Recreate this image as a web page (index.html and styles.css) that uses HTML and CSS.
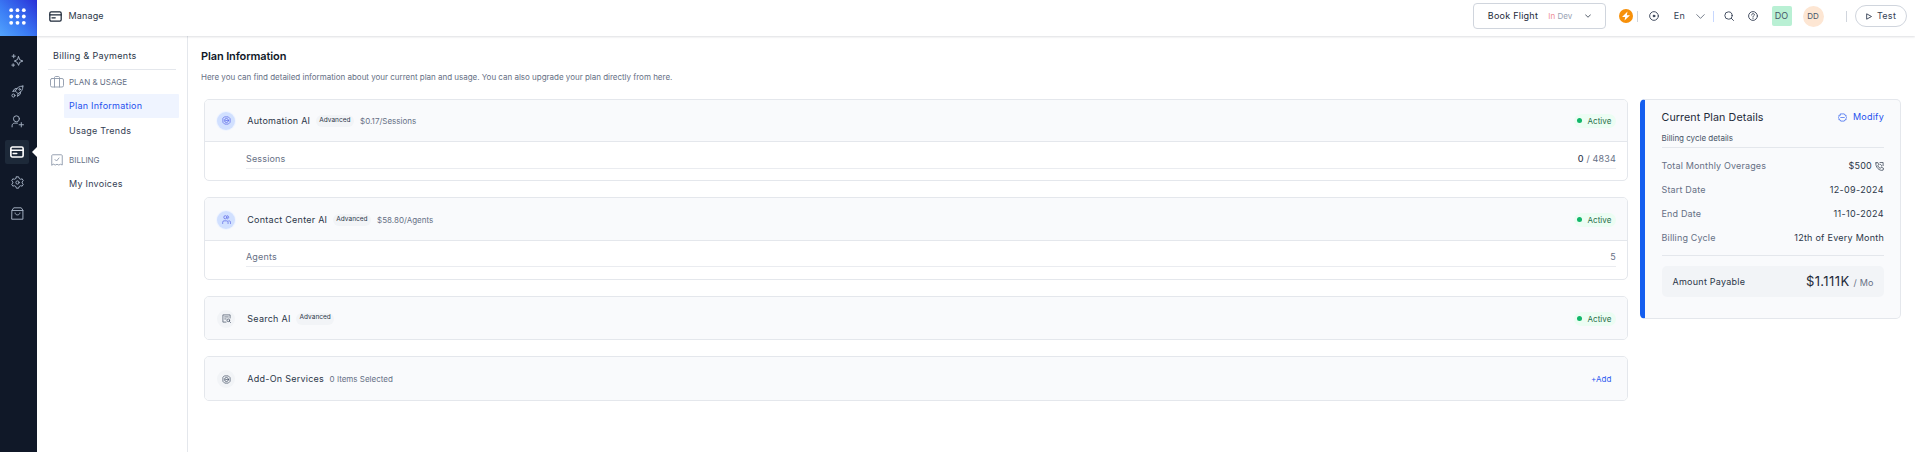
FILE: index.html
```html
<!DOCTYPE html>
<html lang="en">
<head>
<meta charset="utf-8">
<title>Manage - Billing &amp; Payments</title>
<link rel="stylesheet" href="styles.css">
</head>
<body>
<svg class="defs" width="0" height="0">
  <symbol id="card" viewBox="0 0 24 20"><rect x="1.500" y="1.500" width="21" height="17" rx="2.500"/><path d="M1.500 7h21M5.500 12.500h6"/></symbol>
  <symbol id="chip" viewBox="0 0 20 20"><path d="M6 2h8l4 4v8l-4 4H6l-4-4V6z"/><circle cx="10" cy="10" r="4.500"/><path d="M8 10h4"/></symbol>
  <symbol id="chevron" viewBox="0 0 24 24"><path d="M2 7l10 10L22 7"/></symbol>
</svg>
<div class="app">
  <nav class="rail">
    <div class="logo"><svg width="17" height="17" viewBox="0 0 17 17"><g fill="#fff"><circle cx="2.200" cy="2.200" r="1.900"/><circle cx="8.500" cy="2.200" r="1.900"/><circle cx="14.800" cy="2.200" r="1.900"/><circle cx="2.200" cy="8.500" r="1.900"/><circle cx="8.500" cy="8.500" r="1.900"/><circle cx="14.800" cy="8.500" r="1.900"/><circle cx="2.200" cy="14.800" r="1.900"/><circle cx="8.500" cy="14.800" r="1.900"/><circle cx="14.800" cy="14.800" r="1.900"/></g></svg></div>
    <div class="rail-items">
      <a class="rail-item"><svg class="ic" width="13" height="13" viewBox="0 0 24 24"><path d="M14 5l2 5.500 6 2.500-6 2.500-2 5.500-2.500-5.500L6 13l5.500-2.500zM5 1v6M2 4h6M4 18v5M1.500 20.500h5"/></svg></a>
      <a class="rail-item"><svg class="ic" width="13" height="13" viewBox="0 0 24 24"><path d="M22 2c-7 0-11 3-14 9l5 5c6-3 9-7 9-14zM8 11l-5 1 4-5 4-.500M13 16l-1 5 5-4 .500-4"/><circle cx="4.500" cy="19.500" r="2.800"/><circle cx="16" cy="8" r="1.500"/></svg></a>
      <a class="rail-item"><svg class="ic" width="13" height="13" viewBox="0 0 24 24"><circle cx="10" cy="7" r="5.500"/><path d="M2 22v-2c0-3 2-5 5-5h5M19 14v8M15 18h8"/></svg></a>
      <a class="rail-item active"><svg class="ic" width="14" height="12"><use href="#card"/></svg></a>
      <a class="rail-item"><svg class="ic" width="13" height="13" viewBox="0 0 24 24"><path d="M10 1.500h4l1 3 2.500 1.500 3.200-.700 2 3.500L20.500 11v2l2.200 2.200-2 3.500-3.200-.700-2.500 1.500-1 3h-4l-1-3L6.500 18l-3.200.700-2-3.500L3.500 13v-2L1.300 8.800l2-3.500 3.200.700L9 4.500z"/><circle cx="12" cy="12" r="3"/></svg></a>
      <a class="rail-item"><svg class="ic" width="13" height="13" viewBox="0 0 24 24"><path d="M2 6l3-4.500h14L22 6v16.500H2zM2 6.500h20M7.500 11c0 5 9 5 9 0"/></svg></a>
    </div>
  </nav>
  <div class="body">
    <header class="top">
      <svg class="ic dark" width="13" height="11"><use href="#card"/></svg>
      <span class="top-title">Manage</span>
      <div class="top-right">
        <div class="app-select"><span class="app-name">Book Flight</span><span class="app-env"><i>In</i> Dev</span><svg class="ic" width="6" height="6"><use href="#chevron"/></svg></div>
        <svg class="bolt" width="14" height="14" viewBox="0 0 14 14"><circle cx="7" cy="7" r="7" fill="#f79009"/><path d="M8.500 2.500L3 8h3.200L5.500 11.500 11 6.200H7.800z" fill="#fff"/></svg>
        <span class="sep"></span>
        <svg class="ic target" width="10" height="10" viewBox="0 0 20 20"><circle cx="10" cy="10" r="8.700"/><circle cx="10" cy="10" r="1.800" fill="currentColor"/></svg>
        <span class="lang">En</span>
        <svg class="ic lang-chev" width="9" height="9"><use href="#chevron"/></svg>
        <span class="sep blue"></span>
        <svg class="ic search" width="10" height="10" viewBox="0 0 20 20"><circle cx="9" cy="9" r="7.300"/><path d="M14.500 14.500L19 19"/></svg>
        <svg class="ic help" width="10" height="10" viewBox="0 0 20 20"><circle cx="10" cy="10" r="8.800"/><path d="M7.300 8c0-4 5.500-3.500 5.500-.500 0 2-2.800 2-2.800 4M10 14v1"/></svg>
        <span class="tag-do">DO</span>
        <span class="tag-dd">DD</span>
        <span class="sep last"></span>
        <button class="test"><svg class="ic" width="6" height="7" viewBox="0 0 12 14"><path d="M2 2l9 5-9 5z"/></svg>Test</button>
      </div>
    </header>
    <div class="content">
      <aside class="side">
        <h2 class="side-title">Billing &amp; Payments</h2>
        <div class="group"><svg class="ic" width="14" height="12" viewBox="0 0 28 24"><rect x="1" y="5" width="26" height="17" rx="3"/><path d="M9 22V3c0-1 1-2 2-2h6c1 0 2 1 2 2v19"/></svg>PLAN &amp; USAGE</div>
        <a class="link on">Plan Information</a>
        <a class="link">Usage Trends</a>
        <div class="group billing"><svg class="ic" width="12" height="12" viewBox="0 0 24 24"><path d="M1.500 22V4c0-2 1-2.500 2.500-2.500h16c1.500 0 2.500.500 2.500 2.500v18l-3.500-1.500-3.500 1.500-3.500-1.500L8.500 22 5 20.500zM8 11l3 3 5-6"/></svg>BILLING</div>
        <a class="link">My Invoices</a>
      </aside>
      <main class="main">
        <h1 class="title">Plan Information</h1>
        <p class="desc">Here you can find detailed information about your current plan and usage. You can also upgrade your plan directly from here.</p>
        <div class="cols">
          <div class="cards">
            <section class="card c1">
              <div class="card-head"><span class="bubble blue"><svg class="ic" width="9" height="9"><use href="#chip"/></svg></span><span class="name">Automation AI</span><span class="adv">Advanced</span><span class="price">$0.17/Sessions</span><span class="status">Active</span></div>
              <div class="card-row"><span>Sessions</span><span><b>0</b> / 4834</span></div>
            </section>
            <section class="card c2">
              <div class="card-head"><span class="bubble blue"><svg class="ic" width="9" height="9" viewBox="0 0 20 20"><circle cx="7.500" cy="5" r="3.500"/><path d="M12 1.500c4 0 4 7 0 7M1.500 19v-3c0-2 1-3 3-3h6c2 0 3 1 3 3v3M15 13c3 0 4 1 4 3v3"/></svg></span><span class="name">Contact Center AI</span><span class="adv">Advanced</span><span class="price">$58.80/Agents</span><span class="status">Active</span></div>
              <div class="card-row"><span>Agents</span><span>5</span></div>
            </section>
            <section class="card c3">
              <div class="card-head"><span class="bubble"><svg class="ic" width="9" height="9" viewBox="0 0 20 20"><path d="M18 9V2H2v16h7M6 6.500h8M6 11h3"/><circle cx="14" cy="14" r="3"/><path d="M16.500 16.500L19 19"/></svg></span><span class="name">Search AI</span><span class="adv raised">Advanced</span><span class="status">Active</span></div>
            </section>
            <section class="card c4">
              <div class="card-head"><span class="bubble"><svg class="ic" width="9" height="9"><use href="#chip"/></svg></span><span class="name">Add-On Services</span><span class="items">0 Items Selected</span><a class="add">+Add</a></div>
            </section>
          </div>
          <section class="plan">
            <div class="plan-head"><h3>Current Plan Details</h3><a class="modify"><svg class="ic" width="9" height="9" viewBox="0 0 20 20"><path d="M6 2h8l1.500 3H18v3l1 2-1 2v3h-2.500L14 18H6l-1.500-3H2v-3l-1-2 1-2V5h2.500z"/><path d="M6 10h8"/></svg>Modify</a></div>
            <p class="plan-sub">Billing cycle details</p>
            <dl class="facts">
              <div><dt>Total Monthly Overages</dt><dd>$500 <svg class="ic" width="9" height="9" viewBox="0 0 20 20"><path d="M2 2l4-1 2.500 5L6 8c1 3 3 5 6 6l2-2.500 5 2.500-1 4c-8 3-18-7-16-16zM11 1h7v7M11 5c2 0 4 2 4 4"/></svg></dd></div>
              <div><dt>Start Date</dt><dd class="date">12-09-2024</dd></div>
              <div><dt>End Date</dt><dd class="date">11-10-2024</dd></div>
              <div><dt>Billing Cycle</dt><dd>12th of Every Month</dd></div>
            </dl>
            <div class="payable"><span>Amount Payable</span><span class="sum"><strong>$1.111K</strong><em>/ Mo</em></span></div>
          </section>
        </div>
      </main>
    </div>
  </div>
</div>
</body>
</html>
```
FILE: styles.css
```css
* { box-sizing: border-box; margin: 0; padding: 0; }
body { font: 400 9px/12px Inter, "Liberation Sans", sans-serif; letter-spacing: .25px; color: #2b3648; background: #fff; height: 452px; overflow: hidden; }
h1, h2, h3 { font-size: inherit; font-weight: inherit; }
i, em { font-style: normal; }
.defs { display: block; position: absolute; }
.ic { display: block; flex: none; fill: none; stroke: currentColor; stroke-width: 1.8; stroke-linecap: round; stroke-linejoin: round; }
.app { display: flex; height: 452px; }

/* Icon rail */
.rail { width: 37px; flex: none; background: #101828; }
.logo { height: 36px; display: flex; align-items: center; justify-content: center; padding: 0 3px 3px 0; background: linear-gradient(45deg, #53a4fd 0%, #3b7df5 40%, #2a31d8 100%); }
.rail-items { display: flex; flex-direction: column; gap: 6.500px; padding: 12.500px 0 0 5px; }
.rail-item { position: relative; width: 24px; height: 24px; display: flex; align-items: center; justify-content: center; color: #a3b0c2; border-radius: 2px; }
.rail-item.active { background: #1d2939; color: #fff; }
.rail-item.active .ic { stroke-width: 2.800; }
.rail-item.active::after { content: ""; position: absolute; left: 27px; top: 7px; border: 5px solid transparent; border-left: 0; border-right-color: #fff; }

/* Header */
.body { flex: 1; min-width: 0; display: flex; flex-direction: column; }
.top { height: 36px; flex: none; display: flex; align-items: center; padding: 0 8px 4px 12px; position: relative; box-shadow: 0 1px 2px rgba(16,24,40,.14); }
.dark { color: #1d2939; stroke-width: 2.300; }
.top-title { margin-left: 6.500px; letter-spacing: .15px; }
.top-right { margin-left: auto; display: flex; align-items: center; color: #344054; }
.app-select { width: 133px; height: 26px; border: 1px solid #d0d5dd; border-radius: 4px; display: flex; align-items: center; padding-left: 13.500px; margin-right: 13px; color: #1d2939; }
.app-select .ic { margin-left: 12.500px; stroke-width: 3; }
.app-name { width: 60.500px; }
.app-env { font-size: 8px; letter-spacing: 0; color: #98a2b3; }
.app-env i { color: #ee8f98; }
.sep { width: 1px; height: 11px; background: #d0d5dd; margin-left: 4px; }
.sep.blue { background: #c7d7fe; margin-left: 8px; }
.sep.last { margin-left: 22px; }
.target { margin-left: 10.500px; }
.lang { margin-left: 15px; }
.lang-chev { margin-left: 10.500px; }
.search { margin-left: 10px; }
.help { margin-left: 14px; }
.tag-do, .tag-dd { display: flex; align-items: center; justify-content: center; letter-spacing: 0; color: #475467; }
.tag-do { width: 20px; height: 20px; margin-left: 14px; border-radius: 2px; background: #b9f0d4; }
.tag-dd { width: 21px; height: 21px; margin-left: 11px; border-radius: 50%; background: #fde6d3; font-size: 8px; }
.test { width: 52px; height: 22px; margin-left: 8.500px; display: flex; align-items: center; justify-content: center; gap: 5px; border: 1px solid #d0d5dd; border-radius: 11px; background: #fff; font: inherit; letter-spacing: .3px; color: #344054; }

.content { flex: 1; display: flex; min-height: 0; }

/* Side menu */
.side { width: 151px; flex: none; border-right: 1px solid #e4e7ec; padding: 14px 8px 0 11px; }
.side-title { height: 20px; padding: 0 0 0 5px; margin-right: 3px; line-height: 12px; letter-spacing: .31px; border-bottom: 1px solid #e4e7ec; }
.group { display: flex; align-items: center; height: 24px; padding-left: 2px; font-size: 8px; letter-spacing: 0; color: #667085; }
.group .ic { margin-right: 5px; color: #8d98aa; }
.group.billing { margin: 5px 0 0 1px; }
.group.billing .ic { margin-right: 6px; }
.link { display: flex; align-items: center; height: 24px; margin-left: 16px; padding-left: 5px; color: #344054; }
.link + .link { margin-top: 1px; }
.link.on { color: #1f51ee; background: #eff4ff; border-radius: 1px; }

/* Main area */
.main { flex: 1; min-width: 0; padding: 14px 14px 0 13px; }
.title { font-size: 11px; font-weight: 600; line-height: 13px; letter-spacing: -.12px; color: #101828; }
.desc { margin-top: 8px; font-size: 8px; letter-spacing: -.012px; color: #667085; }
.cols { display: flex; align-items: flex-start; gap: 12px; padding: 16px 0 0 3px; }
.cards { flex: 1; min-width: 0; display: flex; flex-direction: column; gap: 16px; }
.card { border: 1px solid #e4e7ec; border-radius: 5px; overflow: hidden; }
.card-head { height: 42px; display: flex; align-items: center; padding: 0 11px 0 12px; background: #f9fafc; }
.c1, .c2 .card-head, .c1 .card-head { border-bottom: 1px solid #e4e7ec; }
.c1 { height: 82px; }
.c2 { height: 83px; }
.c2 .card-head { height: 43px; padding-top: 1px; }
.c3 { height: 44px; }
.c3 .card-head { padding-top: 1px; }
.c4 { height: 45px; }
.c4 .card-head { height: 43px; padding-top: 1px; }
.bubble { width: 18px; height: 18px; border-radius: 50%; display: flex; align-items: center; justify-content: center; background: #f2f4f7; color: #475467; margin-right: 12.300px; }
.bubble .ic { stroke-width: 1.600; }
.bubble.blue { background: #d1e0ff; color: #5a67e8; box-shadow: 0 0 0 1px #eff4ff; }
.adv { height: 12px; padding: 0 3.500px; margin: 0 6px 0 5.500px; border-radius: 6px; background: #f2f4f7; font-size: 6.500px; line-height: 10.500px; letter-spacing: .02px; }
.raised { line-height: 9px; }
.price, .items { font-size: 8px; letter-spacing: 0; color: #667085; }
.items { margin-left: 5.500px; }
.status { margin-left: auto; display: flex; align-items: center; height: 14px; padding: 0 4.500px 0 3px; border-radius: 7px; background: #ecfdf3; font-size: 8px; letter-spacing: .06px; color: #1f7048; }
.status::before { content: ""; width: 5px; height: 5px; border-radius: 50%; background: #12b76a; margin-right: 5px; }
.add { margin: 0 4.500px 0 auto; font-size: 8px; letter-spacing: .06px; color: #2f5cf0; }
.card-row { display: flex; justify-content: space-between; height: 27px; padding-top: 11px; margin: 0 11px 0 41px; border-bottom: 1px solid #eaecf0; letter-spacing: .16px; color: #667085; }
.c2 .card-row { height: 26px; padding-top: 10px; }
.card-row b { font-weight: 500; color: #344054; }

/* Current plan panel */
.plan { position: relative; width: 261px; height: 220px; border: 1px solid #e4e7ec; border-left: 5px solid #155eef; border-radius: 5px; background: #f9fafc; padding: 11px 16px 0 16.500px; }
.plan-head { display: flex; justify-content: space-between; height: 15px; }
.plan-head h3 { font-size: 10.700px; line-height: 13px; letter-spacing: .09px; color: #1d2939; }
.modify { display: flex; align-items: center; gap: 6px; height: 12px; color: #1f51ee; }
.modify .ic { stroke-width: 1.400; }
.plan-sub { height: 22px; padding-top: 6px; font-size: 8px; letter-spacing: -.02px; color: #475467; border-bottom: 1px solid #e4e7ec; }
.facts { height: 108px; padding-top: 6px; border-bottom: 1px solid #e4e7ec; }
.facts div { display: flex; align-items: center; justify-content: space-between; height: 24px; }
.facts dt { letter-spacing: .16px; color: #667085; }
.facts dd { display: flex; align-items: center; gap: 3px; }
.facts dd .ic { stroke-width: 1.600; }
.facts .date { letter-spacing: .36px; }
.payable { display: flex; align-items: center; justify-content: space-between; height: 31px; margin-top: 10px; padding: 0 10.500px 0 11px; border-radius: 5px; background: #f2f4f7; }
.sum { display: flex; align-items: baseline; gap: 4px; }
.sum strong { font-size: 13px; font-weight: 400; letter-spacing: .4px; color: #1d2939; }
.sum em { letter-spacing: .16px; color: #667085; }
```
